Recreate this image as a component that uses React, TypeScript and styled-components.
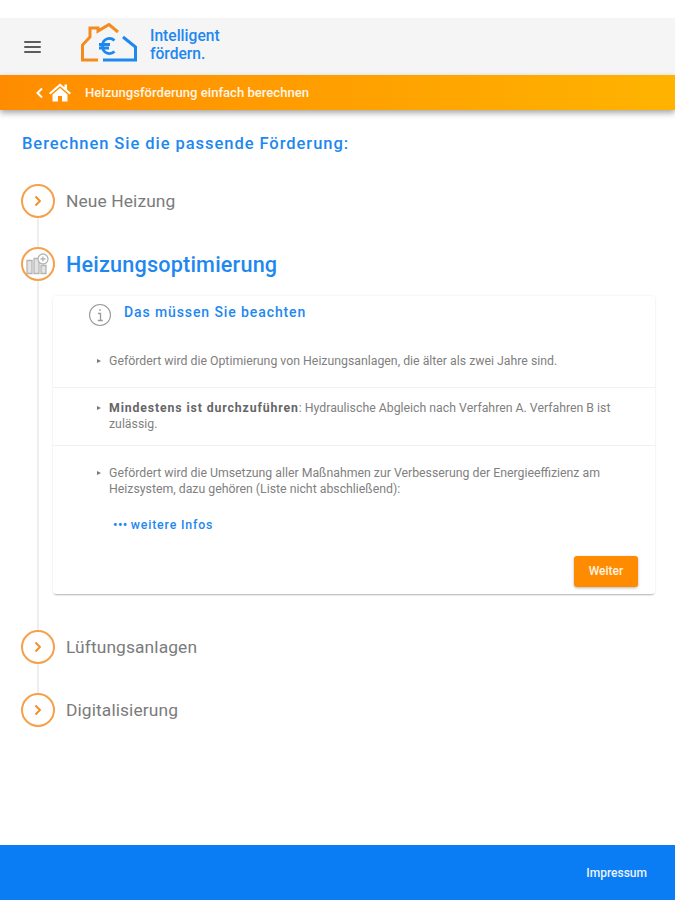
import * as React from "react";
import styled, { createGlobalStyle } from "styled-components";

const Global = createGlobalStyle`
  html, body {
    margin: 0;
    padding: 0;
    background: #fff;
    font-family: Roboto, "Liberation Sans", sans-serif;
  }
  * { box-sizing: border-box; }
`;

const Page = styled.div`
  display: flex;
  flex-direction: column;
  height: 900px;
  width: 675px;
  padding-top: 18px;
  overflow: hidden;
`;

const Header = styled.header`
  display: flex;
  align-items: center;
  height: 57px;
  flex: none;
  background: #f5f5f5;
  padding-left: 24px;
`;

const MenuIcon = styled.div`
  display: flex;
  flex-direction: column;
  gap: 3px;
  width: 17px;
  margin-right: 40px;
  span {
    height: 2px;
    background: #5c5c5c;
    border-radius: 1px;
  }
`;

const LogoWrap = styled.div`
  display: flex;
  margin-bottom: 7px;
`;

const Brand = styled.div`
  font-size: 15.6px;
  line-height: 18px;
  font-weight: 500;
  color: #1e88f0;
  margin: 0 0 4px 13px;
`;

const OrangeBar = styled.div`
  display: flex;
  align-items: center;
  height: 35px;
  flex: none;
  padding-left: 35px;
  background: linear-gradient(90deg, #ff8c00, #ffb300);
  box-shadow: 0 3px 6px rgba(0, 0, 0, 0.35);
  color: #fff5e8;
  font-size: 13.1px;
  font-weight: 500;
  position: relative;
`;

const BarTitle = styled.span`
  margin-left: 14px;
`;

const HomeSvg = styled.svg`
  margin-left: 5px;
`;

const Main = styled.main`
  flex: 1;
  padding: 24px 20px 0 21px;
`;

const Heading = styled.h1`
  margin: 0 0 31px 1px;
  font-size: 16.5px;
  line-height: 19px;
  font-weight: 500;
  letter-spacing: 0.95px;
  color: #1e88f0;
`;

const Steps = styled.div`
  display: flex;
  flex-direction: column;
  position: relative;
`;

const Rail = styled.div`
  position: absolute;
  left: 16px;
  top: 20px;
  bottom: 30px;
  width: 2px;
  background: #eeeeee;
`;

const Step = styled.div<{ $gap: number }>`
  display: flex;
  align-items: center;
  gap: 11px;
  height: 34px;
  margin-bottom: ${(p) => p.$gap}px;
  position: relative;
`;

const Circle = styled.div`
  display: flex;
  align-items: center;
  justify-content: center;
  width: 34px;
  height: 34px;
  flex: none;
  border-radius: 50%;
  border: 2px solid #f5a04a;
  background: #fff;
`;

const StepLabel = styled.div<{ $active?: boolean }>`
  font-size: ${(p) => (p.$active ? "21.6px" : "17.4px")};
  font-weight: ${(p) => (p.$active ? 500 : 400)};
  letter-spacing: ${(p) => (p.$active ? "0.2px" : "0.1px")};
  color: ${(p) => (p.$active ? "#1e88f0" : "#7b7b7b")};
`;

const Card = styled.section`
  margin: -12px 0 36px 32px;
  width: 602px;
  height: 298px;
  flex: none;
  background: #fff;
  border-radius: 3px;
  position: relative;
  box-shadow: 0 2px 2px -1px rgba(0, 0, 0, 0.28), 0 0 3px rgba(0, 0, 0, 0.08);
  display: flex;
  flex-direction: column;
`;

const CardHead = styled.div`
  display: flex;
  align-items: center;
  gap: 12px;
  height: 35px;
  padding: 2px 0 0 35px;
  flex: none;
`;

const CardTitle = styled.div`
  font-size: 14px;
  font-weight: 500;
  letter-spacing: 0.9px;
  color: #1e88f0;
  margin-top: -5px;
`;

const Row = styled.div<{ $height: number; $border?: boolean }>`
  height: ${(p) => p.$height}px;
  flex: none;
  padding: 0 40px 0 44px;
  border-bottom: ${(p) => (p.$border ? "1px solid #f0f0f0" : "none")};
  position: relative;
`;

const RowText = styled.p<{ $top: number }>`
  margin: 0;
  padding: ${(p) => p.$top}px 0 0 12px;
  font-size: 12.3px;
  line-height: 15.5px;
  color: #808080;
  position: relative;
  &::before {
    content: "";
    position: absolute;
    left: 0;
    top: ${(p) => p.$top + 5}px;
    border-left: 4px solid #777;
    border-top: 2.5px solid transparent;
    border-bottom: 2.5px solid transparent;
  }
  b {
    font-weight: 700;
    letter-spacing: 0.87px;
    color: #666;
  }
`;

const More = styled.div`
  display: flex;
  align-items: center;
  font-size: 12.3px;
  font-weight: 500;
  letter-spacing: 0.85px;
  color: #1e88f0;
  padding: 21px 0 0 16px;
  i {
    font-style: normal;
    font-weight: 700;
    letter-spacing: 0.5px;
    margin-right: 3px;
  }
`;

const Actions = styled.div`
  display: flex;
  justify-content: flex-end;
  padding: 24px 17px 0 0;
  margin-right: -40px;
`;

const Button = styled.button`
  width: 64px;
  height: 31px;
  border: 0;
  border-radius: 3px;
  padding: 0 0 2px;
  background: #ff8c00;
  color: #fff3e2;
  font-family: inherit;
  font-size: 12px;
  font-weight: 500;
  box-shadow: 0 1px 3px rgba(0, 0, 0, 0.3);
`;

const Footer = styled.footer`
  display: flex;
  align-items: center;
  justify-content: flex-end;
  height: 55px;
  flex: none;
  padding-right: 28px;
  background: #0a7cf4;
  color: #eaf3fe;
  font-size: 12px;
  font-weight: 500;
`;

const Logo = () => (
  <svg width="56" height="40" viewBox="0 0 56 40" fill="none" strokeWidth="3">
    <path d="M17 37H1.500V22L9 14V5H17V8L28 1.500L37 9" stroke="#f58a1f" />
    <path d="M42 14L54.500 24V37H22" stroke="#1e88f0" />
    <path
      d="M33.500 17.500C29 13.500 21.500 15.500 21.500 23C21.500 30.500 29 32.500 33.500 28.500M18 21.500H29M18 25H28"
      stroke="#1e88f0"
      strokeWidth="2.800"
    />
  </svg>
);

const Chevron = () => (
  <svg width="10" height="12" viewBox="0 0 10 12" fill="none">
    <path d="M2.500 1.500L7 6L2.500 10.500" stroke="#f58a1f" strokeWidth="1.800" />
  </svg>
);

const BackIcon = () => (
  <svg width="9" height="12" viewBox="0 0 9 12" fill="none">
    <path d="M7 1.500L2.500 6L7 10.500" stroke="#fff" strokeWidth="2" />
  </svg>
);

const HomeIcon = () => (
  <HomeSvg width="22" height="19" viewBox="0 0 22 19" fill="#fff">
    <path d="M11 0.500L0 10L1.300 11.500L11 3.200L20.700 11.500L22 10L18 6.500V1.500H15.500V4.300Z" />
    <path d="M11 5L3.500 11.400V18.500H9V13H13V18.500H18.500V11.400Z" />
  </HomeSvg>
);

const OptimizeIcon = () => (
  <svg width="24" height="22" viewBox="0 0 24 22" fill="none" stroke="#b5b5b5" strokeWidth="1.300">
    <path d="M1 7.500H6V20.500H1ZM8 5.500H13V20.500H8ZM15 12.500H20V20.500H15Z" fill="#e4e4e4" />
    <circle cx="17" cy="6" r="5" fill="#fff" />
    <path d="M17 3.500V8.500M14.500 6H19.500" />
  </svg>
);

const InfoIcon = () => (
  <svg width="24" height="24" viewBox="0 0 24 24" fill="none" stroke="#9a9a9a" strokeWidth="1.100">
    <circle cx="12" cy="12" r="10.500" />
    <path d="M10 10.500H12.500V17.500M9.800 17.500H14.800M11.200 7H12.800" strokeWidth="1.300" />
  </svg>
);

export default function App() {
  return (
    <Page>
      <Global />
      <Header>
        <MenuIcon>
          <span />
          <span />
          <span />
        </MenuIcon>
        <LogoWrap>
          <Logo />
        </LogoWrap>
        <Brand>
          Intelligent
          <br />
          fördern.
        </Brand>
      </Header>
      <OrangeBar>
        <BackIcon />
        <HomeIcon />
        <BarTitle>Heizungsförderung einfach berechnen</BarTitle>
      </OrangeBar>
      <Main>
        <Heading>Berechnen Sie die passende Förderung:</Heading>
        <Steps>
          <Rail />
          <Step $gap={29}>
            <Circle>
              <Chevron />
            </Circle>
            <StepLabel>Neue Heizung</StepLabel>
          </Step>
          <Step $gap={27}>
            <Circle>
              <OptimizeIcon />
            </Circle>
            <StepLabel $active>Heizungsoptimierung</StepLabel>
          </Step>
          <Card>
            <CardHead>
              <InfoIcon />
              <CardTitle>Das müssen Sie beachten</CardTitle>
            </CardHead>
            <Row $height={57} $border>
              <RowText $top={23}>
                Gefördert wird die Optimierung von Heizungsanlagen, die älter als zwei Jahre sind.
              </RowText>
            </Row>
            <Row $height={58} $border>
              <RowText $top={13}>
                <b>Mindestens ist durchzuführen</b>: Hydraulische Abgleich nach Verfahren A. Verfahren B ist
                zulässig.
              </RowText>
            </Row>
            <Row $height={148}>
              <RowText $top={20}>
                Gefördert wird die Umsetzung aller Maßnahmen zur Verbesserung der Energieeffizienz am
                Heizsystem, dazu gehören (Liste nicht abschließend):
              </RowText>
              <More>
                <i>•••</i>weitere Infos
              </More>
              <Actions>
                <Button>Weiter</Button>
              </Actions>
            </Row>
          </Card>
          <Step $gap={29}>
            <Circle>
              <Chevron />
            </Circle>
            <StepLabel>Lüftungsanlagen</StepLabel>
          </Step>
          <Step $gap={0}>
            <Circle>
              <Chevron />
            </Circle>
            <StepLabel>Digitalisierung</StepLabel>
          </Step>
        </Steps>
      </Main>
      <Footer>Impressum</Footer>
    </Page>
  );
}
